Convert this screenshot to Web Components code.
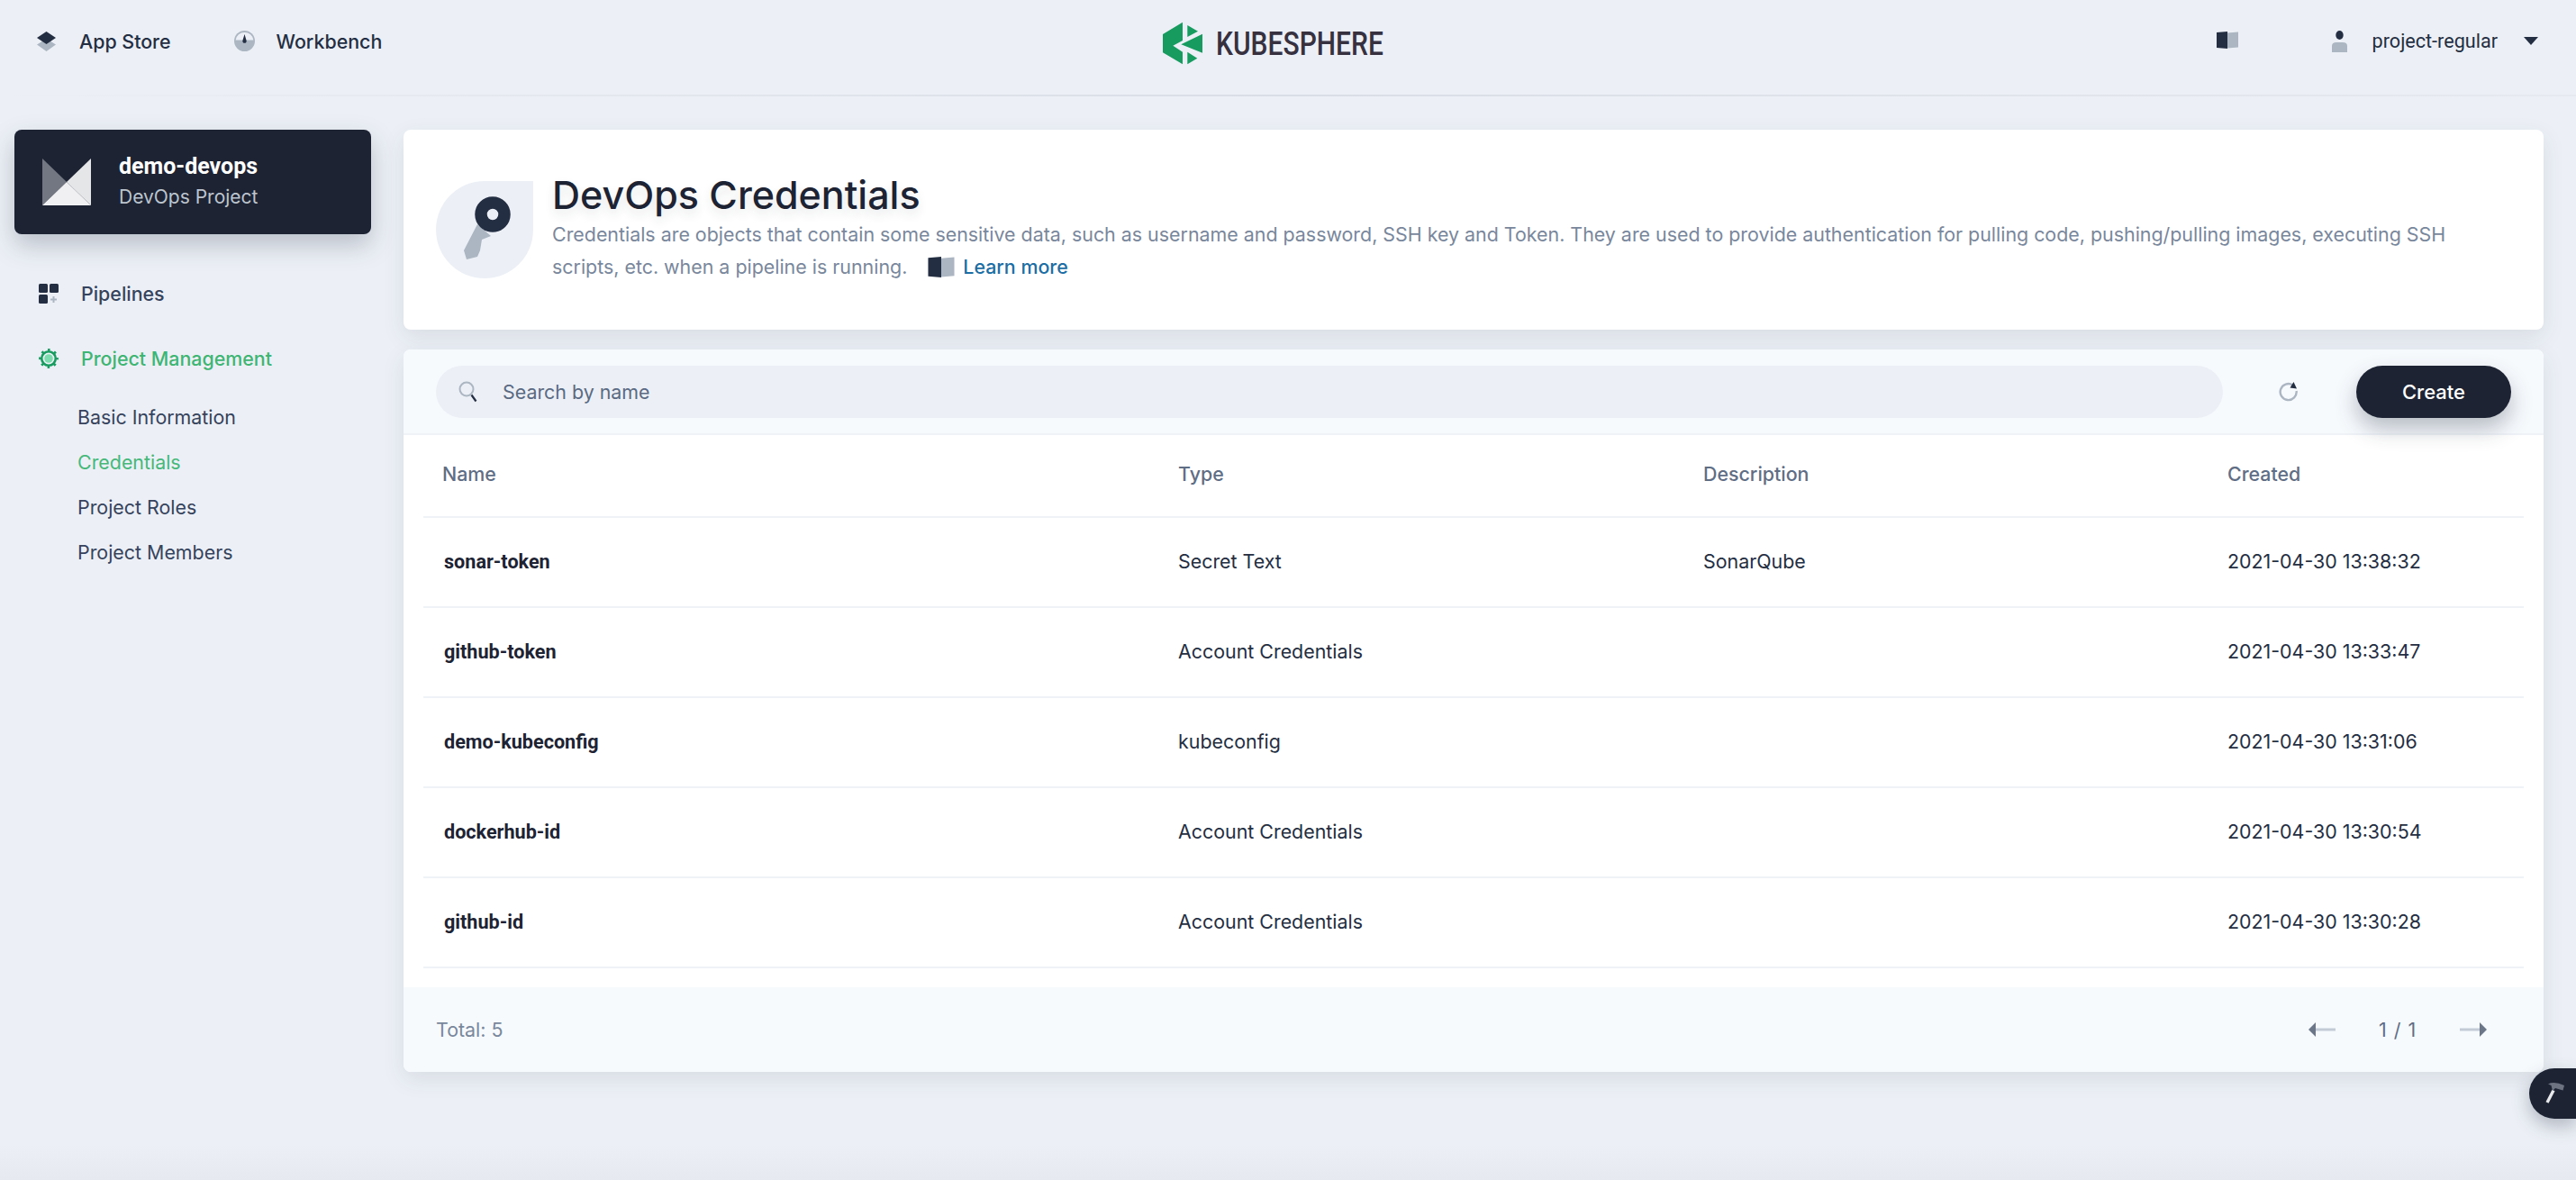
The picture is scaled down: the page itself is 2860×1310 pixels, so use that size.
<!DOCTYPE html>
<html lang="en">
<head>
<meta charset="utf-8">
<title>DevOps Credentials</title>
<style>
    html, body { margin: 0; height: 100%; }
    body {
        background: linear-gradient(180deg, #ecf0f6 0, #ecf0f6 1270px, #e6eaf0 1310px);
        font-family: Inter, Roboto, "Noto Sans", sans-serif;
        color: #242e42;
        overflow: hidden;
    }
    .shell { display: grid; grid-template-columns: 448px 1fr; }
</style>
</head>
<body>
<ks-navbar></ks-navbar>
<div class="shell">
    <ks-sidebar>
        <ks-project-card slot="card" name="demo-devops" kind="DevOps Project"></ks-project-card>
    </ks-sidebar>
    <ks-content>
        <ks-banner title="DevOps Credentials" link="Learn more"><span class="first">Credentials are objects that contain some sensitive data, such as username and password, SSH key and Token. They are used to provide authentication for pulling code, pushing/pulling images, executing SSH</span> scripts, etc. when a pipeline is running.</ks-banner>
        <ks-cred-table></ks-cred-table>
    </ks-content>
</div>
<ks-tool-button></ks-tool-button>

<script>
// table content
const credentials = [
    { name: "sonar-token", type: "Secret Text", desc: "SonarQube", created: "2021-04-30 13:38:32" },
    { name: "github-token", type: "Account Credentials", desc: "", created: "2021-04-30 13:33:47" },
    { name: "demo-kubeconfig", type: "kubeconfig", desc: "", created: "2021-04-30 13:31:06" },
    { name: "dockerhub-id", type: "Account Credentials", desc: "", created: "2021-04-30 13:30:54" },
    { name: "github-id", type: "Account Credentials", desc: "", created: "2021-04-30 13:30:28" }
];

const bookIcon = (w, h) => `
    <svg width="${w}" height="${h}" viewBox="0 0 24 19">
        <path d="M0 1 L12 0 L12 19 L0 18 Z" fill="#242e42"/>
        <path d="M12 1.5 L24 0.5 L24 17.5 L12 18.5 Z" fill="#abb6c2"/>
    </svg>`;

// Top bar
class KsNavbar extends HTMLElement {
    constructor() {
        super();
        this.attachShadow({ mode: 'open' });
        this.shadowRoot.innerHTML = `
            <style>
                :host {
                    display: grid;
                    grid-template-columns: 1fr auto 1fr;
                    align-items: center;
                    height: 107px;
                    padding-bottom: 14px;
                    box-sizing: border-box;
                    border-bottom: 2px solid #dfe3ea;
                    border-image: linear-gradient(90deg, #eceff5, #d9dde5 50%, #e6e9ef) 1;
                    font-size: 21.4px;
                    color: #242e42;
                }
                .left { display: flex; align-items: center; padding-left: 41px; }
                .item { display: flex; align-items: center; font-weight: 500; }
                .item svg { display: block; }
                .store { margin-right: 70px; }
                .store svg { margin-right: 26px; }
                .bench svg { margin-right: 24px; }
                .logo { display: flex; align-items: center; margin: 5px 36px 0 0; }
                .word {
                    display: block;
                    width: 183px;
                    margin-left: 15px;
                    font: 500 37.5px/38px Roboto, sans-serif;
                    color: #36303f;
                    white-space: nowrap;
                    transform: scaleX(.8);
                    transform-origin: left center;
                }
                .right { display: flex; align-items: center; justify-content: flex-end; padding-right: 42px; }
                .book { margin-right: 104px; display: block; }
                .user { margin-right: 28px; display: block; }
                .name { font-family: Roboto, sans-serif; margin-right: 29px; font-size: 21.6px; }
                .caret { width: 0; height: 0; border: 8px solid transparent; border-top: 9px solid #242e42; border-bottom: 0; }
            </style>
            <div class="left">
                <div class="item store">
                    <svg width="21" height="22" viewBox="0 0 21 22">
                        <path d="M10.5 8 L21 14.5 L10.5 22 L0 14.5 Z" fill="#abb6c2"/>
                        <path d="M10.5 0 L21 7 L10.5 14 L0 7 Z" fill="#242e42"/>
                    </svg>
                    App Store
                </div>
                <div class="item bench">
                    <svg width="23" height="23" viewBox="0 0 23 23">
                        <circle cx="11.5" cy="11.5" r="11.5" fill="#abb6c2"/>
                        <path d="M1.6 10.5 A10 10 0 0 1 21.4 10.5 Z" fill="#ecf0f6"/>
                        <path d="M11.5 4 L13.6 11 A2.2 2.2 0 1 1 9.4 11 Z" fill="#242e42"/>
                    </svg>
                    Workbench
                </div>
            </div>
            <div class="logo">
                <svg width="44" height="50" viewBox="21 23 132 140">
                    <path d="M87 23 L21 63 L21 124 L87 163 L87 122 L55 101 L87 84 Z" fill="#179b5f"/>
                    <path d="M103 33 L138 53 L103 72 Z" fill="#179b5f"/>
                    <path d="M153 62 L153 125 L82 97 Z" fill="#179b5f"/>
                    <path d="M103 122 L136 143 L103 163 Z" fill="#179b5f"/>
                </svg>
                <span class="word">KUBESPHERE</span>
            </div>
            <div class="right">
                <div class="book">${bookIcon(24, 19)}</div>
                <svg class="user" width="17" height="24" viewBox="0 0 17 24">
                    <ellipse cx="8.5" cy="5" rx="4.2" ry="5" fill="#242e42"/>
                    <path d="M0 24 L0 17 Q0 13 5 13 L12 13 Q17 13 17 17 L17 24 Z" fill="#abb6c2"/>
                </svg>
                <span class="name">project-regular</span>
                <span class="caret"></span>
            </div>
        `;
    }
}

// Dark project card on top of the side menu
class KsProjectCard extends HTMLElement {
    constructor() {
        super();
        this.attachShadow({ mode: 'open' });
    }

    connectedCallback() {
        this.shadowRoot.innerHTML = `
            <style>
                :host {
                    display: flex;
                    align-items: center;
                    height: 116px;
                    padding-left: 31px;
                    box-sizing: border-box;
                    background: #1d2333;
                    border-radius: 8px;
                    box-shadow: 0 12px 28px rgba(36, 46, 66, .25);
                    color: #fff;
                }
                svg { display: block; margin-right: 31px; flex: none; }
                .name { font: 700 25px/34px Roboto, sans-serif; }
                .kind { font: 400 21px/34px Inter, sans-serif; color: #bcc5cf; }
            </style>
            <svg width="54" height="52" viewBox="0 0 54 52">
                <path d="M0 0 L0 52 L27 26 Z" fill="#727781"/>
                <path d="M54 0 L54 52 L27 26 Z" fill="#e5e6e8"/>
                <path d="M0 52 L27 26 L54 52 Z" fill="#f0f0f2"/>
            </svg>
            <div>
                <div class="name">${this.getAttribute('name')}</div>
                <div class="kind">${this.getAttribute('kind')}</div>
            </div>
        `;
    }
}

// Side menu
class KsSidebar extends HTMLElement {
    constructor() {
        super();
        this.attachShadow({ mode: 'open' });
        this.shadowRoot.innerHTML = `
            <style>
                :host { display: block; padding: 37px 36px 0 16px; font-size: 21.4px; color: #36435c; }
                .row { display: flex; align-items: center; height: 32px; padding-left: 27px; font-weight: 500; }
                .row svg { display: block; margin-right: 25px; }
                .pipes { margin-top: 50px; }
                .manage { margin-top: 40px; color: #3fb573; }
                ul { list-style: none; margin: 33px 0 0; padding: 0 0 0 70px; }
                li { height: 50px; line-height: 32px; }
                li.on { color: #45b87a; }
            </style>
            <slot name="card"></slot>
            <div class="row pipes">
                <svg width="22" height="22" viewBox="0 0 22 22">
                    <rect x="0" y="0" width="10" height="10" rx="1.5" fill="#242e42"/>
                    <rect x="12" y="0" width="10" height="10" rx="1.5" fill="#242e42"/>
                    <rect x="0" y="12" width="10" height="10" rx="1.5" fill="#242e42"/>
                    <path d="M15.5 14 h2 v2.5 h2.5 v2 h-2.5 v2.5 h-2 v-2.5 h-2.5 v-2 h2.5 Z" fill="#abb6c2"/>
                </svg>
                Pipelines
            </div>
            <div class="row manage">
                <svg width="22" height="22" viewBox="0 0 22 22">
                    <circle cx="11" cy="11" r="7.8" fill="none" stroke="#179b5f" stroke-width="2.6"/>
                    <circle cx="11" cy="11" r="9.6" fill="none" stroke="#179b5f" stroke-width="2.6" stroke-dasharray="2.6 4.94" stroke-dashoffset="1.3"/>
                    <circle cx="11" cy="11" r="4.8" fill="#7ddcad"/>
                </svg>
                Project Management
            </div>
            <ul>
                <li>Basic Information</li>
                <li class="on">Credentials</li>
                <li>Project Roles</li>
                <li>Project Members</li>
            </ul>
        `;
    }
}

// Right column
class KsContent extends HTMLElement {
    constructor() {
        super();
        this.attachShadow({ mode: 'open' });
        this.shadowRoot.innerHTML = `
            <style>
                :host { display: flex; flex-direction: column; gap: 22px; padding: 37px 36px 0 0; }
            </style>
            <slot></slot>
        `;
    }
}

// Page title card
class KsBanner extends HTMLElement {
    constructor() {
        super();
        this.attachShadow({ mode: 'open' });
    }

    connectedCallback() {
        this.shadowRoot.innerHTML = `
            <style>
                :host {
                    display: flex;
                    align-items: center;
                    height: 222px;
                    padding: 0 36px;
                    box-sizing: border-box;
                    background: #fff;
                    border-radius: 8px;
                    box-shadow: 0 8px 24px rgba(36, 46, 66, .1);
                }
                .pic {
                    flex: none;
                    width: 108px;
                    height: 108px;
                    margin-right: 21px;
                    background: #ecf0f6;
                    border-radius: 50% 0 50% 50%;
                }
                .pic svg { display: block; }
                h1 {
                    margin: -6px 0 0;
                    font: 500 43px/52px Inter, sans-serif;
                    color: #1d2333;
                    text-shadow: 0 6px 12px rgba(36, 46, 66, .12);
                    white-space: nowrap;
                }
                p {
                    margin: 0;
                    font-size: 21.4px;
                    line-height: 36px;
                    color: #79879c;
                }
                ::slotted(.first) { display: block; white-space: nowrap; }
                .more { display: inline-flex; align-items: center; margin-left: 23px; vertical-align: top; height: 36px; color: #1c6ea4; font-weight: 500; }
                .more svg { display: block; margin-right: 9px; }
            </style>
            <div class="pic">
                <svg width="108" height="108" viewBox="484 202 108 108">
                    <path d="M530 250 L515 279 L518 289 L530 286 L533 279 L535 267 L545 263 Z" fill="#abb6c2"/>
                    <circle cx="547" cy="239" r="13" fill="none" stroke="#242e42" stroke-width="13.5"/>
                </svg>
            </div>
            <div>
                <h1>${this.getAttribute('title')}</h1>
                <p><slot></slot><span class="more">${bookIcon(30, 23)}${this.getAttribute('link')}</span></p>
            </div>
        `;
    }
}

// Table card with toolbar and footer
class KsCredTable extends HTMLElement {
    constructor() {
        super();
        this.attachShadow({ mode: 'open' });
    }

    connectedCallback() {
        const rows = credentials.map(c => `
            <div class="row">
                <b>${c.name}</b>
                <span>${c.type}</span>
                <span>${c.desc}</span>
                <span>${c.created}</span>
            </div>`).join('');

        this.shadowRoot.innerHTML = `
            <style>
                :host {
                    display: block;
                    background: #fff;
                    border-radius: 8px;
                    box-shadow: 0 8px 24px rgba(36, 46, 66, .1);
                    font-size: 21.4px;
                    color: #242e42;
                }
                .bar {
                    display: flex;
                    align-items: center;
                    height: 95px;
                    padding: 0 36px;
                    box-sizing: border-box;
                    background: #f7fafd;
                    border-bottom: 2px solid #eff3f8;
                    border-radius: 8px 8px 0 0;
                }
                .search {
                    flex: 1;
                    display: flex;
                    align-items: center;
                    height: 58px;
                    padding-left: 25px;
                    background: #ecf0f6;
                    border-radius: 29px;
                    color: #5a6a82;
                }
                .search svg { display: block; margin-right: 27px; }
                .refresh { display: block; margin: 0 64px 0 62px; flex: none; }
                button {
                    flex: none;
                    width: 172px;
                    height: 58px;
                    border: 0;
                    border-radius: 29px;
                    background: #1d2333;
                    color: #fff;
                    font: 500 22px Inter, sans-serif;
                    box-shadow: 0 12px 24px rgba(36, 46, 66, .3);
                }
                .rows { padding: 0 22px 21px; }
                .row {
                    display: grid;
                    grid-template-columns: 817px 583px 582px 1fr;
                    align-items: center;
                    height: 100px;
                    padding: 0 0 2px 21px;
                    border-bottom: 2px solid #eff3f8;
                    box-sizing: border-box;
                }
                .row.head { height: 92px; padding-bottom: 4px; color: #5f6e85; font-weight: 500; }
                .row b { font-family: Roboto, sans-serif; font-weight: 700; margin-left: 2px; font-size: 21.6px; color: #1d2333; }
                .foot {
                    display: flex;
                    align-items: center;
                    justify-content: space-between;
                    height: 94px;
                    padding: 0 36px;
                    box-sizing: border-box;
                    background: #f7fafd;
                    border-radius: 0 0 8px 8px;
                    color: #79879c;
                }
                .pager { display: flex; align-items: center; gap: 48px; padding-right: 27px; color: #5f6e85; }
                .pager span { width: 42px; white-space: nowrap; letter-spacing: 1px; }
                .pager svg { display: block; }
            </style>
            <div class="bar">
                <div class="search">
                    <svg width="22" height="24" viewBox="0 0 22 24">
                        <circle cx="9" cy="9" r="7.5" fill="none" stroke="#abb6c2" stroke-width="2"/>
                        <path d="M14.5 15.5 L19.5 22.5" stroke="#242e42" stroke-width="2.2"/>
                    </svg>
                    Search by name
                </div>
                <svg class="refresh" width="22" height="22" viewBox="0 0 22 22">
                    <path d="M15.5 3.5 A9 9 0 1 0 19.6 10" fill="none" stroke="#abb6c2" stroke-width="2.4"/>
                    <path d="M16.5 0 L20 7.5 L12.5 6.5 Z" fill="#242e42"/>
                </svg>
                <button>Create</button>
            </div>
            <div class="rows">
                <div class="row head">
                    <span>Name</span><span>Type</span><span>Description</span><span>Created</span>
                </div>
                ${rows}
            </div>
            <div class="foot">
                <span>Total: 5</span>
                <div class="pager">
                    <svg width="30" height="16" viewBox="0 0 30 16">
                        <path d="M8 6.5 H30 V9.5 H8 Z" fill="#c3ccd6"/>
                        <path d="M8 0 V16 L0 8 Z" fill="#6b7789"/>
                    </svg>
                    <span>1 / 1</span>
                    <svg width="30" height="16" viewBox="0 0 30 16">
                        <path d="M0 6.5 H22 V9.5 H0 Z" fill="#c3ccd6"/>
                        <path d="M22 0 V16 L30 8 Z" fill="#6b7789"/>
                    </svg>
                </div>
            </div>
        `;
    }
}

// Floating toolbox at the right edge
class KsToolButton extends HTMLElement {
    constructor() {
        super();
        this.attachShadow({ mode: 'open' });
        this.shadowRoot.innerHTML = `
            <style>
                :host {
                    position: fixed;
                    left: 2808px;
                    top: 1186px;
                    width: 52px;
                    height: 56px;
                    display: block;
                    background: #1d2333;
                    border-radius: 28px 0 0 28px;
                    box-shadow: 0 8px 20px rgba(36, 46, 66, .3);
                }
                svg { position: absolute; left: 18px; top: 15px; display: block; }
            </style>
            <svg width="21" height="24" viewBox="0 0 21 24">
                <path d="M2 23 L9 9.5" stroke="#e8e9eb" stroke-width="3.4"/>
                <path d="M3 2.5 Q10 -1 21 4 L19.5 9.5 L11 7 L8 10 L6.5 4 Z" fill="#6d7380"/>
            </svg>
        `;
    }
}

customElements.define('ks-navbar', KsNavbar);
customElements.define('ks-project-card', KsProjectCard);
customElements.define('ks-sidebar', KsSidebar);
customElements.define('ks-content', KsContent);
customElements.define('ks-banner', KsBanner);
customElements.define('ks-cred-table', KsCredTable);
customElements.define('ks-tool-button', KsToolButton);
</script>
</body>
</html>
